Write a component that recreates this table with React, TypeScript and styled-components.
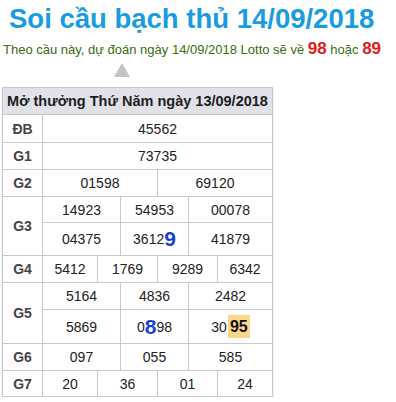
import React from "react";
import styled, { createGlobalStyle } from "styled-components";

const Global = createGlobalStyle`
  html, body { margin: 0; padding: 0; background: #fff; }
  body { font-family: "Liberation Sans", Arial, sans-serif; }
`;

const Page = styled.div`
  padding: 2px 0 0 2px;
  display: flex;
  flex-direction: column;
`;

const Title = styled.h1`
  margin: 0 0 0 7px;
  font-size: 27.5px;
  line-height: 34px;
  font-weight: bold;
  color: #1b9be0;
`;

const Subtitle = styled.p`
  margin: 3px 0 0 1px;
  font-size: 13px;
  line-height: 20px;
  color: #3a6b12;
`;

const Red = styled.b`
  color: #e41a1a;
  font-size: 17px;
`;

const Pointer = styled.div`
  margin: 3px 0 0 112px;
  width: 0;
  height: 0;
  border-left: 8px solid transparent;
  border-right: 8px solid transparent;
  border-bottom: 14px solid #c4c4c4;
`;

const Board = styled.div`
  margin-top: 10px;
  display: grid;
  grid-template-columns: 40px 55px 23px 37px 31px 29px 55px;
  grid-template-rows: 27px 28px 27px 27px 26px 33px 27px 27px 34px 27px 26px;
  width: fit-content;
  border-left: 1px solid #c8c8c8;
  border-top: 1px solid #c8c8c8;
  box-shadow: 0 1px 1px #bdbdbd;
  box-sizing: content-box;
`;

const Cell = styled.div<{ $span?: number; $rows?: number }>`
  grid-column: span ${(p) => p.$span ?? 1};
  grid-row: span ${(p) => p.$rows ?? 1};
  border-right: 1px solid #c8c8c8;
  border-bottom: 1px solid #c8c8c8;
  display: flex;
  align-items: center;
  justify-content: center;
  font-size: 14px;
  color: #222;
  box-sizing: border-box;
`;

const HeadCell = styled(Cell)`
  background: #e0e2e8;
  font-weight: bold;
  color: #1e1e1e;
  font-size: 14.5px;
`;

const Label = styled(Cell)`
  font-weight: bold;
  color: #444;
  font-size: 14px;
`;

const Big = styled.b`
  color: #1a3fd6;
  font-size: 21px;
  line-height: 20px;
`;

const Hit = styled.b`
  background: #fcd68a;
  color: #111;
  font-size: 16px;
  line-height: 23px;
  padding: 0 2px;
  margin-left: 1px;
`;

type Row = { label: string; span: number; values: React.ReactNode[] };

export default function App() {
  const simple: Row[] = [
    { label: "ĐB", span: 6, values: ["45562"] },
    { label: "G1", span: 6, values: ["73735"] },
    { label: "G2", span: 3, values: ["01598", "69120"] },
  ];
  return (
    <>
      <Global />
      <Page>
        <Title>Soi cầu bạch thủ 14/09/2018</Title>
        <Subtitle>
          Theo cầu này, dự đoán ngày 14/09/2018 Lotto sẽ về <Red>98</Red> hoặc <Red>89</Red>
        </Subtitle>
        <Pointer />
        <Board>
          <HeadCell $span={7}>Mở thưởng Thứ Năm ngày 13/09/2018</HeadCell>
          {simple.map((r) => (
            <React.Fragment key={r.label}>
              <Label>{r.label}</Label>
              {r.values.map((v, i) => (
                <Cell key={i} $span={r.span}>{v}</Cell>
              ))}
            </React.Fragment>
          ))}
          <Label $rows={2}>G3</Label>
          <Cell $span={2}>14923</Cell>
          <Cell $span={2}>54953</Cell>
          <Cell $span={2}>00078</Cell>
          <Cell $span={2}>04375</Cell>
          <Cell $span={2}>3612<Big>9</Big></Cell>
          <Cell $span={2}>41879</Cell>
          <Label>G4</Label>
          <Cell>5412</Cell>
          <Cell $span={2}>1769</Cell>
          <Cell $span={2}>9289</Cell>
          <Cell>6342</Cell>
          <Label $rows={2}>G5</Label>
          <Cell $span={2}>5164</Cell>
          <Cell $span={2}>4836</Cell>
          <Cell $span={2}>2482</Cell>
          <Cell $span={2}>5869</Cell>
          <Cell $span={2}>0<Big>8</Big>98</Cell>
          <Cell $span={2}>30<Hit>95</Hit></Cell>
          <Label>G6</Label>
          <Cell $span={2}>097</Cell>
          <Cell $span={2}>055</Cell>
          <Cell $span={2}>585</Cell>
          <Label>G7</Label>
          <Cell>20</Cell>
          <Cell $span={2}>36</Cell>
          <Cell $span={2}>01</Cell>
          <Cell>24</Cell>
        </Board>
      </Page>
    </>
  );
}
